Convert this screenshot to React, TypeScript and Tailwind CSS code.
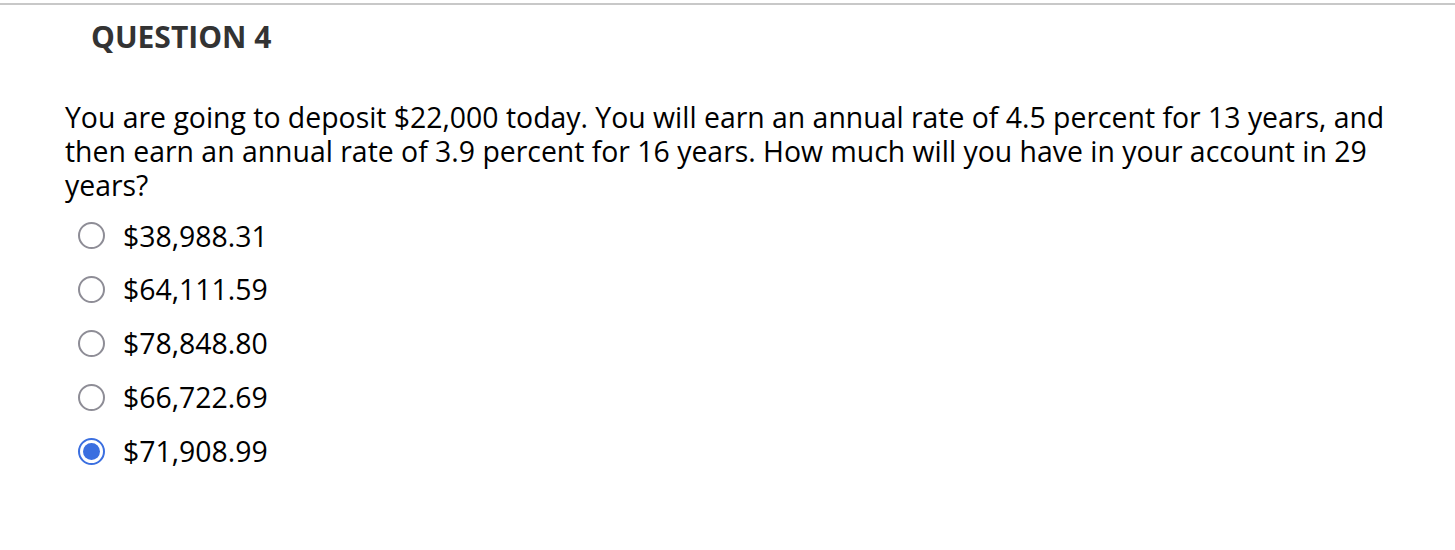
const options = ["$38,988.31", "$64,111.59", "$78,848.80", "$66,722.69", "$71,908.99"];

function Radio({ checked }: { checked: boolean }) {
  if (checked) {
    return (
      <span className="w-[27px] h-[27px] rounded-full border-2 border-[#3b6fe0] flex items-center justify-center shrink-0">
        <span className="w-[17px] h-[17px] rounded-full bg-[#3b6fe0]" />
      </span>
    );
  }
  return <span className="w-[27px] h-[27px] rounded-full border-2 border-[#8e8d96] shrink-0" />;
}

export default function App() {
  return (
    <div className="bg-white w-[1455px] h-[550px] pt-[3px]" style={{ fontFamily: '"Open Sans", sans-serif' }}>
      <div className="h-[2px] bg-[#c8c8c8]" />
      <h2 className="pl-[91px] mt-[12px] text-[30px] leading-[40px] font-bold text-[#333333]">QUESTION 4</h2>
      <p className="pl-[65px] pr-[50px] mt-[43px] text-[28.4px] leading-[34px] text-black">
        You are going to deposit $22,000 today. You will earn an annual rate of 4.5 percent for 13 years, and then earn an annual rate of 3.9 percent for 16 years. How much will you have in your account in 29 years?
      </p>
      <div className="flex flex-col pl-[78px] mt-[7px]">
        {options.map((o, i) => (
          <label key={o} className="flex items-center gap-[18px] h-[53.8px] text-[28.4px] text-black">
            <Radio checked={i === 4} />
            <span>{o}</span>
          </label>
        ))}
      </div>
    </div>
  );
}
